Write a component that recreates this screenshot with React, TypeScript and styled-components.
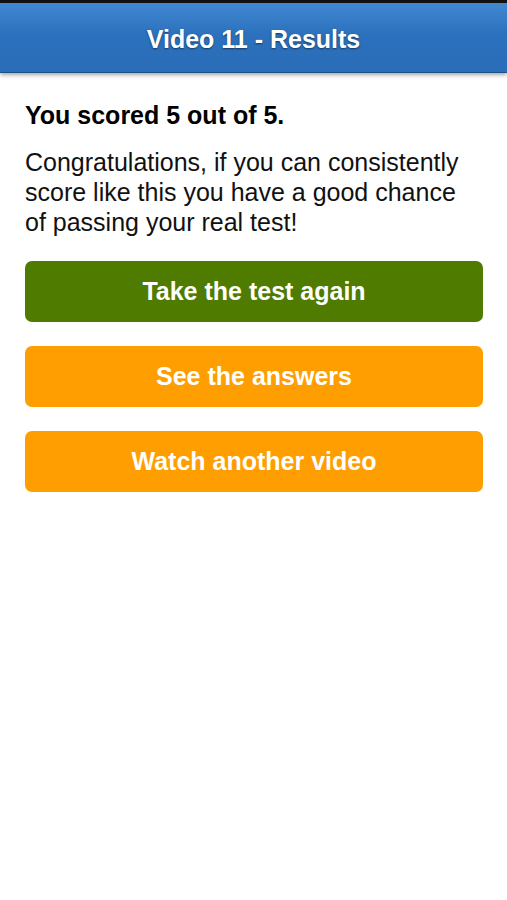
import React from "react";
import styled, { createGlobalStyle } from "styled-components";

const GlobalStyle = createGlobalStyle`
  html, body {
    margin: 0;
    padding: 0;
    background: #ffffff;
  }
  body {
    font-family: "Liberation Sans", Arial, sans-serif;
  }
`;

const Page = styled.div`
  width: 507px;
  min-height: 900px;
  background: #ffffff;
`;

const Header = styled.header`
  height: 69px;
  box-sizing: content-box;
  border-top: 3px solid #111111;
  border-bottom: 1px solid #1d4f88;
  background: linear-gradient(#4287d0, #2c71bd 45%, #2a6db8);
  box-shadow: 0 2px 4px rgba(0, 0, 0, 0.35);
  display: flex;
  align-items: center;
  justify-content: center;
`;

const Title = styled.h1`
  margin: 3px 0 0;
  color: #ffffff;
  font-size: 25px;
  font-weight: bold;
  text-shadow: 0 1px 2px rgba(0, 0, 0, 0.5);
`;

const Content = styled.main`
  padding: 27px 24px 0 25px;
`;

const Score = styled.p`
  margin: 0;
  font-size: 25px;
  font-weight: bold;
  line-height: 30px;
  color: #000000;
`;

const Message = styled.p`
  margin: 17px 0 0;
  font-size: 25px;
  line-height: 30px;
  color: #111111;
`;

const Actions = styled.div`
  display: flex;
  flex-direction: column;
  gap: 24px;
  margin-top: 24px;
`;

const Button = styled.button<{ $tone: "green" | "orange" }>`
  height: 61px;
  width: 458px;
  border: none;
  border-radius: 7px;
  background: ${(p) => (p.$tone === "green" ? "#4f7b00" : "#ff9e00")};
  color: #ffffff;
  font-family: "Liberation Sans", Arial, sans-serif;
  font-size: 25px;
  font-weight: bold;
  cursor: pointer;
`;

export default function App() {
  return (
    <Page>
      <GlobalStyle />
      <Header>
        <Title>Video 11 - Results</Title>
      </Header>
      <Content>
        <Score>You scored 5 out of 5.</Score>
        <Message>
          Congratulations, if you can consistently score like this you have a good chance of passing your real test!
        </Message>
        <Actions>
          <Button $tone="green">Take the test again</Button>
          <Button $tone="orange">See the answers</Button>
          <Button $tone="orange">Watch another video</Button>
        </Actions>
      </Content>
    </Page>
  );
}
